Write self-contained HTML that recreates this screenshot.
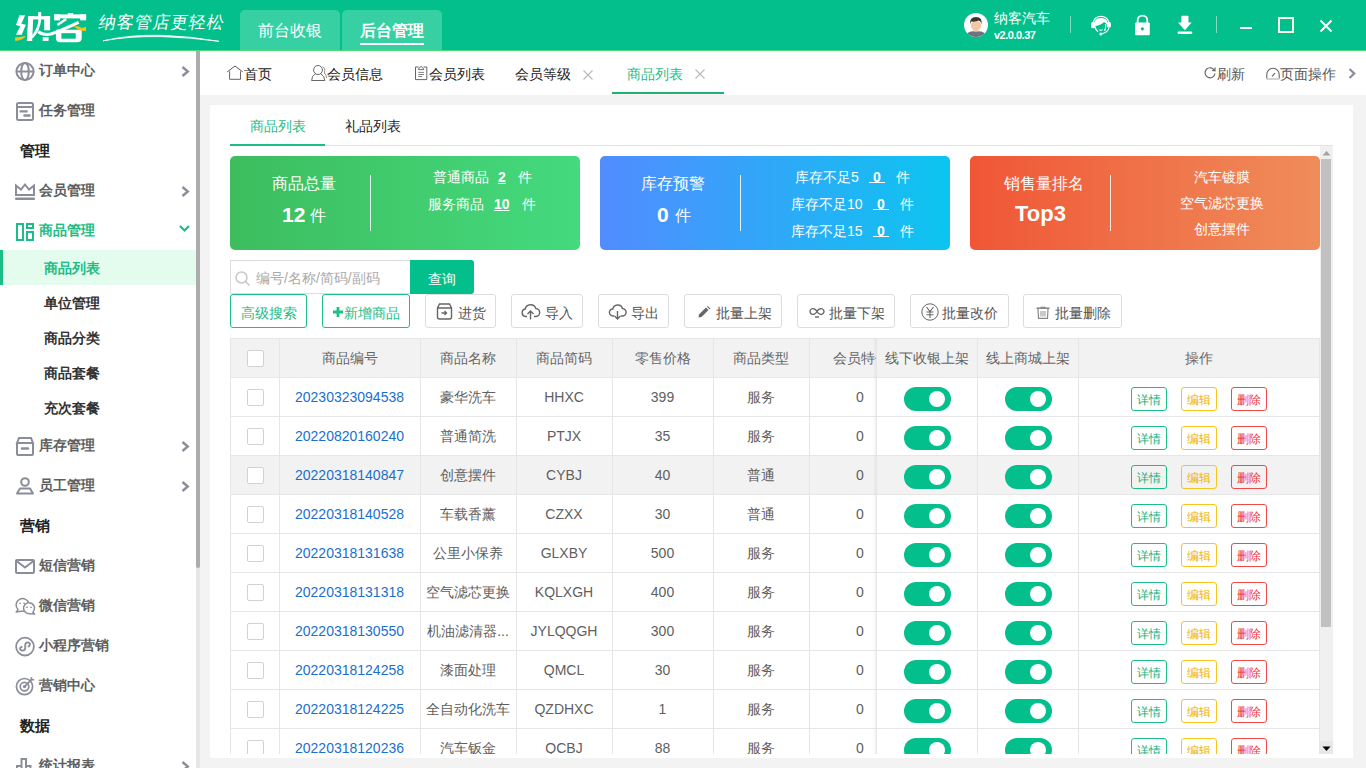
<!DOCTYPE html>
<html><head><meta charset="utf-8">
<style>
*{margin:0;padding:0;box-sizing:border-box}
html,body{width:1366px;height:768px;overflow:hidden;background:#f3f3f3;font-family:"Liberation Sans",sans-serif;}
.a{position:absolute;white-space:nowrap}
svg{position:absolute;overflow:visible}
#hdr{position:absolute;z-index:5;left:0;top:0;width:1366px;height:51px;background:#02bf8b;border-bottom:1px solid #4fd97c}
.htab{position:absolute;top:10px;height:40px;width:100px;background:#36d0a3;border-radius:5px 5px 0 0;color:#fff;font-size:16px;text-align:center;line-height:42px}
#side{position:absolute;left:0;top:50px;width:196px;height:718px;background:#fff;overflow:hidden}
.mt{left:39px;height:40px;line-height:40px;font-size:14px;font-weight:bold;color:#5e5e5e}
.sec{position:absolute;left:20px;margin-top:1px;font-size:15px;font-weight:bold;color:#222;line-height:40px}
.st{left:44px;margin-top:1px;height:35px;line-height:35px;font-size:14px;font-weight:bold;color:#333}
#tabs{position:absolute;left:200px;top:51px;width:1166px;height:44px;background:#fff}
.tt{top:1px;height:44px;line-height:44px;font-size:14px;color:#222}
#panel{position:absolute;left:210px;top:105px;width:1143px;height:653px;background:#fff;overflow:hidden}
</style></head><body>
<!-- HEADER -->
<div id="hdr">
  <svg style="left:0;top:0" width="240" height="50">
    <g fill="#fff">
      <polygon points="19.4,15.2 25.1,15.2 21.4,23.8 25.9,24.8 21.7,34.7 16,34.7 20.2,26.3 16,25.1"/>
      <polygon points="28.3,16.2 33.3,16.2 32.2,40.9 26.8,40.9"/>
      <rect x="28.3" y="16.2" width="21.8" height="3.2"/>
      <rect x="38.2" y="12" width="3" height="7.6"/>
      <rect x="44.2" y="16.2" width="5.9" height="14.1"/>
      <rect x="42.7" y="37.2" width="5.9" height="3.7"/>
      <rect x="67.8" y="13" width="5.4" height="2.6"/>
      <rect x="54.2" y="14.4" width="31.9" height="4"/>
      <rect x="54.2" y="14.4" width="5.8" height="6"/>
      <rect x="80.2" y="14.4" width="5.9" height="6"/>
      <path d="M55.9 29.8 H81.7 V38 Q81.7 42.2 77 42.2 H60 Q55.9 42.2 55.9 38 Z"/>
    </g>
    <rect x="61.4" y="33.2" width="14.3" height="5.5" fill="#02bf8b"/>
    <g stroke="#fff" fill="none">
      <path d="M40 19 Q38.8 30 32 37.5" stroke-width="2.6"/>
      <path d="M38.2 31.5 Q43 35.5 51 34 Q60 31 78.7 22.4" stroke-width="3"/>
      <path d="M57.4 25.1 L66.3 19.1" stroke-width="2.4"/>
    </g>
    <path d="M15 37.6 Q20 37.2 25.5 36 Q24.5 39.5 15.3 41Z" fill="#f7c21a"/>
    <path d="M73.5 26 Q79 25.8 82 28 L86 26.8 L86 30.8 Q80 32 73.5 26Z" fill="#f7c21a"/>
  </svg>
  <svg style="left:0;top:0" width="240" height="50"><path d="M103 40.8 Q130 34.5 161 35.3 Q190 36.2 219 41.3 Q190 37.4 161 36.6 Q130 36 103 40.8Z" fill="#fff" stroke="#fff" stroke-width="0.8"/></svg>
  <div class="a" style="left:99px;top:11px;font-family:'Liberation Serif',serif;font-size:17px;color:#fff;letter-spacing:1px;line-height:23px;transform:skewX(-10deg)">纳客管店更轻松</div>
  <div class="htab" style="left:240px">前台收银</div>
  <div class="htab" style="left:342px;font-weight:bold">后台管理<div style="position:absolute;left:18px;top:33px;width:64px;height:2px;background:#fff"></div></div>
  <!-- avatar -->
  <svg style="left:964px;top:13px" width="24" height="24" viewBox="0 0 24 24">
    
    <circle cx="12" cy="12" r="12" fill="#fff"/>
    <path d="M3.3 20.3 Q6 18 12 18 Q18 18 20.7 20.3 A12 12 0 0 1 3.3 20.3Z" fill="#6f7282"/>
    <rect x="10.2" y="15" width="3.6" height="3.8" fill="#f0c49e"/>
    <ellipse cx="12" cy="12.6" rx="5.1" ry="5.2" fill="#f3c7a1"/>
    <path d="M6 11.8 Q5.2 4 12 4 Q18.5 4 17.6 11.3 Q16.8 8.2 15 7.6 Q11 9.2 7.2 8.6 Q6.4 9.8 6 11.8Z" fill="#363636"/>
  </svg>
  <div class="a" style="left:994px;top:8px;font-size:14px;color:#fff;line-height:20px">纳客汽车</div>
  <div class="a" style="left:994px;top:28px;font-size:11px;font-weight:bold;color:#fff;line-height:14px;letter-spacing:-0.5px">v2.0.0.37</div>
  <div class="a" style="left:1070px;top:16px;width:1px;height:17px;background:#7fdcbc"></div>
  <!-- headset -->
  <svg style="left:1088px;top:12px" width="26" height="26" viewBox="0 0 26 26">
    <path d="M5 10.5 A8.3 8.3 0 0 1 21 10.5" stroke="#fff" stroke-width="1.2" fill="none"/>
    <path d="M6.3 10.5 Q7 6 13 6 Q19 6 19.6 10.5 L19.6 13 L17.8 11.3 Q16.5 9.8 15.8 10.3 Q14 12.5 8 14 L6.5 15Z" fill="#fff"/>
    <rect x="3" y="10" width="4.3" height="6.2" rx="1.6" fill="#fff"/>
    <rect x="19" y="10" width="3.9" height="5.6" rx="1.6" fill="#fff"/>
    <path d="M7 15 Q7.8 18.5 10 19.8" stroke="#fff" stroke-width="1.3" fill="none"/>
    <path d="M17.6 12 Q18 17 16.5 18.8" stroke="#fff" stroke-width="1.3" fill="none"/>
    <path d="M11.3 17.8 Q13 18.8 14.9 17.6" stroke="#fff" stroke-width="1.1" fill="none"/>
    <path d="M21 15.5 Q20 20.5 13.5 21.8" stroke="#fff" stroke-width="1.2" fill="none"/>
    <circle cx="12.8" cy="22" r="1.5" fill="#fff"/>
  </svg>
  <!-- lock -->
  <svg style="left:1134px;top:15px" width="16" height="21" viewBox="0 0 16 21">
    <path d="M3.6 8.5 L3.6 5.4 A4.85 4.85 0 0 1 13.3 5.4 L13.3 8.5" stroke="#fff" stroke-width="1.8" fill="none"/>
    <rect x="1" y="7.6" width="14.8" height="12.7" rx="1.3" fill="#fff"/>
    <circle cx="8.4" cy="13.8" r="1.6" fill="#02bf8b"/>
  </svg>
  <!-- download -->
  <svg style="left:1177px;top:15px" width="16" height="20" viewBox="0 0 16 20">
    <rect x="4.4" y="0.7" width="7.1" height="9" rx="1" fill="#fff"/>
    <path d="M1 7.6 L14.7 7.6 L7.9 15.2Z" fill="#fff"/>
    <rect x="0.6" y="16.5" width="14.7" height="2.5" rx="1.2" fill="#fff"/>
  </svg>
  <div class="a" style="left:1216px;top:16px;width:1px;height:17px;background:#7fdcbc"></div>
  <div class="a" style="left:1240px;top:27px;width:12px;height:2px;background:#fff"></div>
  <div class="a" style="left:1278px;top:17px;width:16px;height:16px;border:2px solid #fbfde6"></div>
  <svg style="left:1320px;top:20px" width="12" height="12"><path d="M0.5 0.5 L11.5 11.5 M11.5 0.5 L0.5 11.5" stroke="#fff" stroke-width="2"/></svg>
</div>

<div id="side">
 <!-- 订单中心 y50-90 -->
 <svg style="left:15px;top:12px" width="20" height="20" viewBox="0 0 20 20"><g stroke="#8c8d9a" stroke-width="2" fill="none"><circle cx="10" cy="9.5" r="8.6"/><ellipse cx="10" cy="9.5" rx="3.8" ry="8.6"/><path d="M1.5 9.5H18.5"/></g></svg>
 <div class="a mt" style="top:0">订单中心</div>
 <svg style="left:181px;top:16px" width="9" height="11"><path d="M1.5 1 L6.8 5.5 L1.5 10" stroke="#8c8d9a" stroke-width="2.4" fill="none"/></svg>
 <!-- 任务管理 y90-130 -->
 <svg style="left:16px;top:52px" width="18" height="19" viewBox="0 0 18 19"><g stroke="#8c8d9a" stroke-width="2" fill="none"><rect x="1" y="1" width="16" height="17" rx="1.5"/><path d="M1 5H17"/><path d="M4.6 9.4H10.6M8.4 13.5H13.6" stroke-linecap="round" stroke-width="2.4"/></g></svg>
 <div class="a mt" style="top:40px">任务管理</div>
 <div class="a sec" style="top:80px">管理</div>
 <!-- 会员管理 y170-210 -->
 <svg style="left:15px;top:133px" width="20" height="17" viewBox="0 0 20 17"><g stroke="#8c8d9a" stroke-width="2" fill="none"><path d="M1 12 L1 2.5 L6 6.5 L10 1.5 L14 6.5 L19 2.5 L19 12 Z"/></g><rect x="0" y="14.5" width="20" height="2.5" rx="1" fill="#8c8d9a"/></svg>
 <div class="a mt" style="top:120px">会员管理</div>
 <svg style="left:181px;top:136px" width="9" height="11"><path d="M1.5 1 L6.8 5.5 L1.5 10" stroke="#8c8d9a" stroke-width="2.4" fill="none"/></svg>
 <!-- 商品管理 y210-250 -->
 <svg style="left:16px;top:173px" width="18" height="18" viewBox="0 0 18 18"><g stroke="#1dbd87" stroke-width="2" fill="none"><rect x="1" y="1" width="6" height="16"/><rect x="11" y="1" width="6" height="4"/><rect x="11" y="9" width="6" height="8"/></g></svg>
 <div class="a mt" style="top:160px;color:#1dbd87">商品管理</div>
 <svg style="left:179px;top:175px" width="11" height="7"><path d="M1 1 L5.5 5.5 L10 1" stroke="#1dbd87" stroke-width="2.2" fill="none"/></svg>
 <!-- sub items -->
 <div class="a" style="left:0;top:200px;width:196px;height:35px;background:#e3fcee;border-left:3px solid #1dbd87"></div>
 <div class="a st" style="top:200px;color:#1dbd87">商品列表</div>
 <div class="a st" style="top:235px">单位管理</div>
 <div class="a st" style="top:270px">商品分类</div>
 <div class="a st" style="top:305px">商品套餐</div>
 <div class="a st" style="top:340px">充次套餐</div>
 <!-- 库存管理 y425-465 -->
 <svg style="left:16px;top:387px" width="18" height="19" viewBox="0 0 18 19"><g stroke="#8c8d9a" stroke-width="2" fill="none"><path d="M1 6 L3 1 L15 1 L17 6 Z"/><path d="M1 6 L1 17 Q1 18 2 18 L16 18 Q17 18 17 17 L17 6"/><path d="M6 11.5H12" stroke-linecap="round" stroke-width="2.4"/></g></svg>
 <div class="a mt" style="top:375px">库存管理</div>
 <svg style="left:181px;top:391px" width="9" height="11"><path d="M1.5 1 L6.8 5.5 L1.5 10" stroke="#8c8d9a" stroke-width="2.4" fill="none"/></svg>
 <!-- 员工管理 y465-505 -->
 <svg style="left:16px;top:427px" width="18" height="18" viewBox="0 0 18 18"><g stroke="#8c8d9a" stroke-width="2" fill="none"><circle cx="9" cy="5" r="3.8"/><path d="M1 16.5 L4 11.5 L14 11.5 L17 16.5 Z" stroke-linejoin="round"/></g></svg>
 <div class="a mt" style="top:415px">员工管理</div>
 <svg style="left:181px;top:431px" width="9" height="11"><path d="M1.5 1 L6.8 5.5 L1.5 10" stroke="#8c8d9a" stroke-width="2.4" fill="none"/></svg>
 <div class="a sec" style="top:455px">营销</div>
 <!-- 短信营销 y545-585 -->
 <svg style="left:15px;top:509px" width="20" height="15" viewBox="0 0 20 15"><g stroke="#8c8d9a" stroke-width="2" fill="none"><rect x="1" y="1" width="18" height="13" rx="1"/><path d="M1.5 2 L10 8.5 L18.5 2"/></g></svg>
 <div class="a mt" style="top:495px">短信营销</div>
 <!-- 微信营销 y585-625 -->
 <svg style="left:15px;top:548px" width="21" height="17" viewBox="0 0 21 17"><g stroke="#8c8d9a" stroke-width="1.5" fill="#fff" stroke-linejoin="round"><path d="M3 11.5 A6.4 6.4 0 1 1 6.8 13.3 Q4 13.5 1.2 14 Q2.5 12.5 3 11.5Z"/><path d="M17.8 14.2 A5.5 5.5 0 1 0 14 15.7 Q17 15.8 19.6 16 Q18.5 15 17.8 14.2Z"/></g><g stroke="#8c8d9a" stroke-width="1.2"><path d="M4.3 5.3H5.9M8.3 5.3H9.9M11.2 9.4H12.8M15.2 9.4H16.8"/></g></svg>
 <div class="a mt" style="top:535px">微信营销</div>
 <!-- 小程序营销 y625-665 -->
 <svg style="left:15px;top:587px" width="20" height="20" viewBox="0 0 20 20"><g stroke="#8c8d9a" stroke-width="1.8" fill="none"><circle cx="10" cy="9.6" r="8.9"/><path d="M7.5 9.6 Q5 10 5 11.7 Q5.3 13.6 7.5 13.6 Q10.2 13.4 10.2 11 L10.2 8 Q10.3 5.5 12.5 5.3 Q14.8 5.3 15 7.3 Q14.8 9.3 12.7 9.6"/></g></svg>
 <div class="a mt" style="top:575px">小程序营销</div>
 <!-- 营销中心 y665-705 -->
 <svg style="left:15px;top:627px" width="20" height="20" viewBox="0 0 20 20"><g stroke="#8c8d9a" stroke-width="1.7" fill="none"><circle cx="9.5" cy="9.6" r="8.1"/><circle cx="9.5" cy="9.6" r="4.3"/><path d="M9.5 9.6 L16.5 2.6"/></g><circle cx="9.5" cy="9.6" r="1.7" fill="#8c8d9a"/><path d="M15.5 0.3 L17.3 0.3 L17.3 1.9 L19.2 1.9 L19.2 3.6 L15.5 3.6Z" fill="#8c8d9a"/></svg>
 <div class="a mt" style="top:615px">营销中心</div>
 <div class="a sec" style="top:655px">数据</div>
 <!-- 统计报表 y745-785 -->
 <svg style="left:16px;top:707px" width="18" height="18" viewBox="0 0 18 18"><g stroke="#8c8d9a" stroke-width="2" fill="none"><path d="M1 17 L1 9 L5.5 9 M5.5 17 L5.5 2 L10 2 L10 17 M10 9 L14.5 9 L14.5 17"/></g></svg>
 <div class="a mt" style="top:695px">统计报表</div>
 <svg style="left:181px;top:711px" width="9" height="11"><path d="M1.5 1 L6.8 5.5 L1.5 10" stroke="#8c8d9a" stroke-width="2.4" fill="none"/></svg>
</div>
<div class="a" style="left:196px;top:50px;width:4px;height:718px;background:#e6e6e6"></div>
<div class="a" style="left:196px;top:50px;width:4px;height:518px;background:#acacac;border-radius:0 0 2px 2px"></div>

<div id="tabs">
 <svg style="left:27px;top:14px" width="17" height="16" viewBox="0 0 17 16"><path d="M0.3 6.8 L8 1 L15.7 6.8" stroke="#444" stroke-width="0.9" fill="none"/><path d="M2.6 6.3 L2.6 14.3 L13.5 14.3 L13.5 6.3" stroke="#666" stroke-width="1" fill="none"/></svg>
 <div class="a tt" style="left:44px">首页</div>
 <svg style="left:111px;top:14px" width="17" height="17" viewBox="0 0 17 17"><g stroke="#555" stroke-width="0.9" fill="none"><ellipse cx="7" cy="5" rx="4.4" ry="4.5"/><path d="M4.6 8.5 Q0.6 11 0.6 15.5 L13.8 15.5 Q13.8 11 9.4 8.5"/><path d="M11.6 1.7 Q14.8 3 13.4 8 Q15.6 9.6 15.6 13" stroke="#888"/></g></svg>
 <div class="a tt" style="left:127px">会员信息</div>
 <svg style="left:215px;top:14px" width="13" height="16" viewBox="0 0 13 16"><path d="M3.6 2 L0.5 2 L0.5 14.6 L11.8 14.6 L11.8 2 L8.6 2" stroke="#666" stroke-width="1" fill="none"/><path d="M3.3 4.6 Q4 2.2 6.1 1.3 Q8.2 2.2 8.9 4.6Z" stroke="#666" stroke-width="0.9" fill="#f4f4f4"/><path d="M3.3 7.4H9M3.3 9.5H9M3.3 11.5H7.2" stroke="#777" stroke-width="0.9"/></svg>
 <div class="a tt" style="left:229px">会员列表</div>
 <div class="a tt" style="left:315px">会员等级</div>
 <svg style="left:383px;top:19px" width="10" height="10"><path d="M0.5 0.5 L9.5 9.5 M9.5 0.5 L0.5 9.5" stroke="#bbb" stroke-width="1.2"/></svg>
 <div class="a tt" style="left:427px;color:#1dbd87">商品列表</div>
 <svg style="left:495px;top:18px" width="10" height="10"><path d="M0.5 0.5 L9.5 9.5 M9.5 0.5 L0.5 9.5" stroke="#bbb" stroke-width="1.2"/></svg>
 <div class="a" style="left:412px;top:41px;width:112px;height:2px;background:#1fb36d"></div>
 <svg style="left:1004px;top:16px" width="12" height="12" viewBox="0 0 12 12"><path d="M10.5 3.5 A5 5 0 1 0 11 6.5" stroke="#666" stroke-width="1.2" fill="none"/><path d="M8 3.5 L11 3.8 L11 0.5" stroke="#666" stroke-width="1.2" fill="none"/></svg>
 <div class="a tt" style="left:1017px;color:#555">刷新</div>
 <svg style="left:1066px;top:16px" width="14" height="14" viewBox="0 0 14 14"><path d="M0.8 11.5 L0.8 7.5 A6.2 6.2 0 0 1 13.2 7.5 L13.2 11.5" stroke="#666" stroke-width="1.1" fill="none"/><path d="M6 9.3 L9 6.2" stroke="#666" stroke-width="1.2"/><path d="M0.5 12H13.5" stroke="#c8c8c8" stroke-width="1.6"/></svg>
 <div class="a tt" style="left:1080px;color:#555">页面操作</div>
 <svg style="left:1148px;top:17px" width="9" height="11"><path d="M1.5 1 L6.2 5.5 L1.5 10" stroke="#8c8d9a" stroke-width="2.3" fill="none"/></svg>
</div>
<div id="panel">
<div class="a" style="left:40px;top:11px;font-size:14px;line-height:20px;color:#1dbd87">商品列表</div>
<div class="a" style="left:135px;top:11px;font-size:14px;line-height:20px;color:#222">礼品列表</div>
<div class="a" style="left:20px;top:40px;width:1103px;height:1px;background:#e4e4e4"></div>
<div class="a" style="left:20px;top:39px;width:95px;height:2px;background:#1dbd87"></div>
<div class="a" style="left:20px;top:51px;width:350px;height:94px;background:linear-gradient(90deg,#3dbd5e,#44da7e);border-radius:5px"></div>
<div class="a" style="left:160px;top:70px;width:1px;height:56px;background:rgba(255,255,255,.85)"></div>
<div class="a" style="left:390px;top:51px;width:350px;height:94px;background:linear-gradient(90deg,#518cff,#0cc5f0);border-radius:5px"></div>
<div class="a" style="left:530px;top:70px;width:1px;height:56px;background:rgba(255,255,255,.85)"></div>
<div class="a" style="left:760px;top:51px;width:350px;height:94px;background:linear-gradient(90deg,#f05636,#ef8d5a);border-radius:5px"></div>
<div class="a" style="left:900px;top:70px;width:1px;height:56px;background:rgba(255,255,255,.85)"></div>
<div class="a" style="left:62px;top:68px;color:#fff;font-size:16px;line-height:22px">商品总量</div>
<div class="a" style="left:72px;top:96px;color:#fff;font-size:21px;font-weight:bold;line-height:28px">12</div>
<div class="a" style="left:100px;top:100px;color:#fff;font-size:16px;line-height:22px">件</div>
<div class="a" style="left:223px;top:62px;color:#fff;font-size:14px;line-height:20px">普通商品</div>
<div class="a" style="left:288px;top:62px;color:#fff;font-size:14px;font-weight:bold;line-height:20px"><u>2</u></div>
<div class="a" style="left:308px;top:62px;color:#fff;font-size:14px;line-height:20px">件</div>
<div class="a" style="left:218px;top:89px;color:#fff;font-size:14px;line-height:20px">服务商品</div>
<div class="a" style="left:284px;top:89px;color:#fff;font-size:14px;font-weight:bold;line-height:20px"><u>10</u></div>
<div class="a" style="left:312px;top:89px;color:#fff;font-size:14px;line-height:20px">件</div>
<div class="a" style="left:431px;top:68px;color:#fff;font-size:16px;line-height:22px">库存预警</div>
<div class="a" style="left:447px;top:96px;color:#fff;font-size:21px;font-weight:bold;line-height:28px">0</div>
<div class="a" style="left:465px;top:100px;color:#fff;font-size:16px;line-height:22px">件</div>
<div class="a" style="left:585px;top:62px;color:#fff;font-size:14px;line-height:20px">库存不足5</div>
<div class="a" style="left:659px;top:62px;color:#fff;font-size:14px;font-weight:bold;line-height:20px;width:16px;text-align:center">0</div>
<div class="a" style="left:659px;top:77px;width:16px;height:1px;background:#fff"></div>
<div class="a" style="left:686px;top:62px;color:#fff;font-size:14px;line-height:20px">件</div>
<div class="a" style="left:581px;top:89px;color:#fff;font-size:14px;line-height:20px">库存不足10</div>
<div class="a" style="left:663px;top:89px;color:#fff;font-size:14px;font-weight:bold;line-height:20px;width:16px;text-align:center">0</div>
<div class="a" style="left:663px;top:104px;width:16px;height:1px;background:#fff"></div>
<div class="a" style="left:690px;top:89px;color:#fff;font-size:14px;line-height:20px">件</div>
<div class="a" style="left:581px;top:116px;color:#fff;font-size:14px;line-height:20px">库存不足15</div>
<div class="a" style="left:663px;top:116px;color:#fff;font-size:14px;font-weight:bold;line-height:20px;width:16px;text-align:center">0</div>
<div class="a" style="left:663px;top:131px;width:16px;height:1px;background:#fff"></div>
<div class="a" style="left:690px;top:116px;color:#fff;font-size:14px;line-height:20px">件</div>
<div class="a" style="left:794px;top:68px;color:#fff;font-size:16px;line-height:22px">销售量排名</div>
<div class="a" style="left:805px;top:95px;color:#fff;font-size:22px;font-weight:bold;line-height:28px">Top3</div>
<div class="a" style="left:912px;top:62px;color:#fff;font-size:14px;line-height:20px;width:200px;text-align:center">汽车镀膜</div>
<div class="a" style="left:912px;top:88px;color:#fff;font-size:14px;line-height:20px;width:200px;text-align:center">空气滤芯更换</div>
<div class="a" style="left:912px;top:114px;color:#fff;font-size:14px;line-height:20px;width:200px;text-align:center">创意摆件</div>
<div class="a" style="left:20px;top:155px;width:180px;height:34px;border:1px solid #ddd;border-right:none;background:#fff"></div>
<svg style="left:25px;top:166px" width="16" height="15" viewBox="0 0 16 15"><circle cx="6.5" cy="6.5" r="5.5" stroke="#c8c8c8" stroke-width="1.5" fill="none"/><path d="M10.5 10.5 L14.5 14.5" stroke="#c8c8c8" stroke-width="1.6"/></svg>
<div class="a" style="left:46px;top:163px;font-size:14px;line-height:20px;color:#aaa">编号/名称/简码/副码</div>
<div class="a" style="left:200px;top:155px;width:64px;height:34px;background:#02bf8b;border-radius:0 3px 3px 0;color:#fff;font-size:14px;line-height:34px;padding-top:2px;text-align:center">查询</div>
<div class="a" style="left:20px;top:189px;width:77px;height:34px;border:1px solid #1dbd87;border-radius:3px;color:#1dbd87;font-size:14px;line-height:32px;padding-top:2px;text-align:center">高级搜索</div>
<div class="a" style="left:112px;top:189px;width:88px;height:34px;border:1px solid #1dbd87;border-radius:3px"></div>
<svg style="left:123px;top:202px" width="10" height="10" viewBox="0 0 10 10"><path d="M5 0 V10 M0 5 H10" stroke="#1dbd87" stroke-width="2.8"/></svg>
<div class="a" style="left:134px;top:198px;font-size:14px;line-height:20px;color:#1dbd87">新增商品</div>
<div class="a" style="left:215px;top:189px;width:71px;height:34px;border:1px solid #ddd;border-radius:3px;background:#fff;"></div>
<div class="a" style="left:248px;top:198px;font-size:14px;line-height:20px;color:#555">进货</div>
<div class="a" style="left:301px;top:189px;width:72px;height:34px;border:1px solid #ddd;border-radius:3px;background:#fff;"></div>
<div class="a" style="left:335px;top:198px;font-size:14px;line-height:20px;color:#555">导入</div>
<div class="a" style="left:388px;top:189px;width:71px;height:34px;border:1px solid #ddd;border-radius:3px;background:#fff;"></div>
<div class="a" style="left:421px;top:198px;font-size:14px;line-height:20px;color:#555">导出</div>
<div class="a" style="left:474px;top:189px;width:98px;height:34px;border:1px solid #ddd;border-radius:3px;background:#fff;"></div>
<div class="a" style="left:506px;top:198px;font-size:14px;line-height:20px;color:#555">批量上架</div>
<div class="a" style="left:587px;top:189px;width:98px;height:34px;border:1px solid #ddd;border-radius:3px;background:#fff;"></div>
<div class="a" style="left:619px;top:198px;font-size:14px;line-height:20px;color:#555">批量下架</div>
<div class="a" style="left:700px;top:189px;width:99px;height:34px;border:1px solid #ddd;border-radius:3px;background:#fff;"></div>
<div class="a" style="left:732px;top:198px;font-size:14px;line-height:20px;color:#555">批量改价</div>
<div class="a" style="left:813px;top:189px;width:99px;height:34px;border:1px solid #ddd;border-radius:3px;background:#fff;"></div>
<div class="a" style="left:845px;top:198px;font-size:14px;line-height:20px;color:#555">批量删除</div>
<svg style="left:226px;top:198px" width="17" height="17" viewBox="0 0 17 17"><path d="M1.5 5 L1.5 14 Q1.5 16 3.5 16 L13.5 16 Q15.5 16 15.5 14 L15.5 5 L13.5 1 L3.5 1 Z M1.5 5 L15.5 5" stroke="#666" stroke-width="1.4" fill="none"/><path d="M5.5 10 L10.5 10 M8.5 8 L10.5 10 L8.5 12" stroke="#666" stroke-width="1.4" fill="none"/></svg>
<svg style="left:311px;top:198px" width="19" height="17" viewBox="0 0 19 17"><path d="M6 13.5 L4.5 13.5 A3.8 3.8 0 0 1 4.2 6 A5.5 5.5 0 0 1 14.8 5.5 A4 4 0 0 1 14.5 13.5 L13 13.5" stroke="#666" stroke-width="1.4" fill="none"/><path d="M9.5 16.5 L9.5 8.5 M6.5 11 L9.5 8 L12.5 11" stroke="#666" stroke-width="1.4" fill="none"/></svg>
<svg style="left:399px;top:198px" width="17" height="17" viewBox="0 0 17 17"><path d="M5.5 13 L4 13 A3.5 3.5 0 0 1 3.8 6 A5 5 0 0 1 13.5 5.5 A3.7 3.7 0 0 1 13.2 13 L11.5 13" stroke="#666" stroke-width="1.4" fill="none"/><path d="M8.5 8 L8.5 16 M5.8 13.3 L8.5 16 L11.2 13.3" stroke="#666" stroke-width="1.4" fill="none"/></svg>
<svg style="left:488px;top:201px" width="13" height="12" viewBox="0 0 13 12"><path d="M0.5 11.5 L1 8.5 L8 1.5 L10.5 4 L3.5 11 Z" fill="#666"/><path d="M9 0.8 L9.8 0 L12.5 2.7 L11.7 3.5Z" fill="#666"/></svg>
<svg style="left:599px;top:202px" width="16" height="11" viewBox="0 0 16 11"><path d="M8 4.5 C6.5 2 4 1 2.5 2 C0.5 3.2 0.5 5.8 2.5 7 C4 8 6.5 7 8 4.5 C9.5 2 12 1 13.5 2 C15.5 3.2 15.5 5.8 13.5 7 C12 8 9.5 7 8 4.5Z" stroke="#666" stroke-width="1.4" fill="none"/><path d="M6 10 L10 10" stroke="#666" stroke-width="1.4"/></svg>
<svg style="left:711px;top:198px" width="18" height="18" viewBox="0 0 18 18"><circle cx="9" cy="9" r="8.2" stroke="#666" stroke-width="1" fill="none"/><path d="M5.5 4 L9 8.5 L12.5 4 M9 8.5 L9 15 M5.5 9 L12.5 9 M5.5 11.8 L12.5 11.8" stroke="#666" stroke-width="1.1" fill="none"/></svg>
<svg style="left:826px;top:201px" width="14" height="13" viewBox="0 0 14 13"><path d="M0.5 2.2 L13.5 2.2" stroke="#888" stroke-width="1.6"/><path d="M4.5 1.3 L9.5 1.3" stroke="#888" stroke-width="1.2"/><path d="M2 3 L2.5 12.3 L11.5 12.3 L12 3" stroke="#888" stroke-width="1.2" fill="none"/><path d="M5 5 L5 10.5 M7 5 L7 10.5 M9 5 L9 10.5" stroke="#888" stroke-width="0.9"/></svg>
<div class="a" style="left:20px;top:233px;width:1090px;height:416px;overflow:hidden">
<div class="a" style="left:0px;top:0px;width:1089px;height:39px;background:#f2f2f2"></div>
<div class="a" style="left:0px;top:117px;width:1089px;height:39px;background:#f2f2f2"></div>
<div class="a" style="left:0px;top:0px;width:1089px;height:1px;background:#e6e6e6"></div>
<div class="a" style="left:0px;top:39px;width:1089px;height:1px;background:#e6e6e6"></div>
<div class="a" style="left:0px;top:78px;width:1089px;height:1px;background:#e6e6e6"></div>
<div class="a" style="left:0px;top:117px;width:1089px;height:1px;background:#e6e6e6"></div>
<div class="a" style="left:0px;top:156px;width:1089px;height:1px;background:#e6e6e6"></div>
<div class="a" style="left:0px;top:195px;width:1089px;height:1px;background:#e6e6e6"></div>
<div class="a" style="left:0px;top:234px;width:1089px;height:1px;background:#e6e6e6"></div>
<div class="a" style="left:0px;top:273px;width:1089px;height:1px;background:#e6e6e6"></div>
<div class="a" style="left:0px;top:312px;width:1089px;height:1px;background:#e6e6e6"></div>
<div class="a" style="left:0px;top:351px;width:1089px;height:1px;background:#e6e6e6"></div>
<div class="a" style="left:0px;top:390px;width:1089px;height:1px;background:#e6e6e6"></div>
<div class="a" style="left:0px;top:429px;width:1089px;height:1px;background:#e6e6e6"></div>
<div class="a" style="left:0px;top:0px;width:1px;height:500px;background:#e6e6e6"></div>
<div class="a" style="left:49px;top:0px;width:1px;height:500px;background:#e6e6e6"></div>
<div class="a" style="left:190px;top:0px;width:1px;height:500px;background:#e6e6e6"></div>
<div class="a" style="left:286px;top:0px;width:1px;height:500px;background:#e6e6e6"></div>
<div class="a" style="left:382px;top:0px;width:1px;height:500px;background:#e6e6e6"></div>
<div class="a" style="left:483px;top:0px;width:1px;height:500px;background:#e6e6e6"></div>
<div class="a" style="left:579px;top:0px;width:1px;height:500px;background:#e6e6e6"></div>
<div class="a" style="left:646px;top:0px;width:1px;height:500px;background:#e6e6e6"></div>
<div class="a" style="left:747px;top:0px;width:1px;height:500px;background:#e6e6e6"></div>
<div class="a" style="left:848px;top:0px;width:1px;height:500px;background:#e6e6e6"></div>
<div class="a" style="left:1089px;top:0px;width:1px;height:500px;background:#e6e6e6"></div>
<div class="a" style="left:643px;top:0px;width:3px;height:500px;background:linear-gradient(90deg,rgba(0,0,0,0),rgba(0,0,0,.05))"></div>
<div class="a" style="left:49px;top:1px;width:141px;height:39px;font-size:14px;line-height:39px;color:#666;text-align:center;">商品编号</div>
<div class="a" style="left:190px;top:1px;width:96px;height:39px;font-size:14px;line-height:39px;color:#666;text-align:center;">商品名称</div>
<div class="a" style="left:286px;top:1px;width:96px;height:39px;font-size:14px;line-height:39px;color:#666;text-align:center;">商品简码</div>
<div class="a" style="left:382px;top:1px;width:101px;height:39px;font-size:14px;line-height:39px;color:#666;text-align:center;">零售价格</div>
<div class="a" style="left:483px;top:1px;width:96px;height:39px;font-size:14px;line-height:39px;color:#666;text-align:center;">商品类型</div>
<div class="a" style="left:603px;top:1px;width:43px;height:39px;font-size:14px;line-height:39px;color:#666;overflow:hidden">会员特价</div>
<div class="a" style="left:646px;top:1px;width:101px;height:39px;font-size:14px;line-height:39px;color:#666;text-align:center;">线下收银上架</div>
<div class="a" style="left:747px;top:1px;width:101px;height:39px;font-size:14px;line-height:39px;color:#666;text-align:center;">线上商城上架</div>
<div class="a" style="left:848px;top:1px;width:241px;height:39px;font-size:14px;line-height:39px;color:#666;text-align:center;">操作</div>
<div class="a" style="left:17px;top:12px;width:17px;height:17px;border:1px solid #d2d2d2;border-radius:2px;background:#fff"></div>
<div class="a" style="left:17px;top:51px;width:17px;height:17px;border:1px solid #d2d2d2;border-radius:2px;background:#fff"></div>
<div class="a" style="left:49px;top:40px;width:141px;height:39px;font-size:14px;line-height:39px;color:#606060;text-align:center;color:#1a6fce">20230323094538</div>
<div class="a" style="left:190px;top:40px;width:96px;height:39px;font-size:14px;line-height:39px;color:#606060;text-align:center;">豪华洗车</div>
<div class="a" style="left:286px;top:40px;width:96px;height:39px;font-size:14px;line-height:39px;color:#606060;text-align:center;">HHXC</div>
<div class="a" style="left:382px;top:40px;width:101px;height:39px;font-size:14px;line-height:39px;color:#606060;text-align:center;">399</div>
<div class="a" style="left:483px;top:40px;width:96px;height:39px;font-size:14px;line-height:39px;color:#606060;text-align:center;">服务</div>
<div class="a" style="left:626px;top:40px;width:10px;height:39px;font-size:14px;line-height:39px;color:#606060">0</div>
<div class="a" style="left:674px;top:49px;width:47px;height:24px;background:#02bf8b;border-radius:12px"></div>
<div class="a" style="left:699px;top:53px;width:16px;height:16px;background:#fff;border-radius:50%"></div>
<div class="a" style="left:775px;top:49px;width:47px;height:24px;background:#02bf8b;border-radius:12px"></div>
<div class="a" style="left:800px;top:53px;width:16px;height:16px;background:#fff;border-radius:50%"></div>
<div class="a" style="left:901px;top:49px;width:36px;height:24px;border:1px solid #1dbd87;border-radius:3px;color:#12b07c;font-size:12px;line-height:22px;text-align:center;padding-top:1px">详情</div>
<div class="a" style="left:951px;top:49px;width:36px;height:24px;border:1px solid #f8c51c;border-radius:3px;color:#f2b200;font-size:12px;line-height:22px;text-align:center;padding-top:1px">编辑</div>
<div class="a" style="left:1001px;top:49px;width:36px;height:24px;border:1px solid #f14848;border-radius:3px;color:#ec3434;font-size:12px;line-height:22px;text-align:center;padding-top:1px">删除</div>
<div class="a" style="left:17px;top:90px;width:17px;height:17px;border:1px solid #d2d2d2;border-radius:2px;background:#fff"></div>
<div class="a" style="left:49px;top:79px;width:141px;height:39px;font-size:14px;line-height:39px;color:#606060;text-align:center;color:#1a6fce">20220820160240</div>
<div class="a" style="left:190px;top:79px;width:96px;height:39px;font-size:14px;line-height:39px;color:#606060;text-align:center;">普通简洗</div>
<div class="a" style="left:286px;top:79px;width:96px;height:39px;font-size:14px;line-height:39px;color:#606060;text-align:center;">PTJX</div>
<div class="a" style="left:382px;top:79px;width:101px;height:39px;font-size:14px;line-height:39px;color:#606060;text-align:center;">35</div>
<div class="a" style="left:483px;top:79px;width:96px;height:39px;font-size:14px;line-height:39px;color:#606060;text-align:center;">服务</div>
<div class="a" style="left:626px;top:79px;width:10px;height:39px;font-size:14px;line-height:39px;color:#606060">0</div>
<div class="a" style="left:674px;top:88px;width:47px;height:24px;background:#02bf8b;border-radius:12px"></div>
<div class="a" style="left:699px;top:92px;width:16px;height:16px;background:#fff;border-radius:50%"></div>
<div class="a" style="left:775px;top:88px;width:47px;height:24px;background:#02bf8b;border-radius:12px"></div>
<div class="a" style="left:800px;top:92px;width:16px;height:16px;background:#fff;border-radius:50%"></div>
<div class="a" style="left:901px;top:88px;width:36px;height:24px;border:1px solid #1dbd87;border-radius:3px;color:#12b07c;font-size:12px;line-height:22px;text-align:center;padding-top:1px">详情</div>
<div class="a" style="left:951px;top:88px;width:36px;height:24px;border:1px solid #f8c51c;border-radius:3px;color:#f2b200;font-size:12px;line-height:22px;text-align:center;padding-top:1px">编辑</div>
<div class="a" style="left:1001px;top:88px;width:36px;height:24px;border:1px solid #f14848;border-radius:3px;color:#ec3434;font-size:12px;line-height:22px;text-align:center;padding-top:1px">删除</div>
<div class="a" style="left:17px;top:129px;width:17px;height:17px;border:1px solid #d2d2d2;border-radius:2px;background:#fff"></div>
<div class="a" style="left:49px;top:118px;width:141px;height:39px;font-size:14px;line-height:39px;color:#606060;text-align:center;color:#1a6fce">20220318140847</div>
<div class="a" style="left:190px;top:118px;width:96px;height:39px;font-size:14px;line-height:39px;color:#606060;text-align:center;">创意摆件</div>
<div class="a" style="left:286px;top:118px;width:96px;height:39px;font-size:14px;line-height:39px;color:#606060;text-align:center;">CYBJ</div>
<div class="a" style="left:382px;top:118px;width:101px;height:39px;font-size:14px;line-height:39px;color:#606060;text-align:center;">40</div>
<div class="a" style="left:483px;top:118px;width:96px;height:39px;font-size:14px;line-height:39px;color:#606060;text-align:center;">普通</div>
<div class="a" style="left:626px;top:118px;width:10px;height:39px;font-size:14px;line-height:39px;color:#606060">0</div>
<div class="a" style="left:674px;top:127px;width:47px;height:24px;background:#02bf8b;border-radius:12px"></div>
<div class="a" style="left:699px;top:131px;width:16px;height:16px;background:#fff;border-radius:50%"></div>
<div class="a" style="left:775px;top:127px;width:47px;height:24px;background:#02bf8b;border-radius:12px"></div>
<div class="a" style="left:800px;top:131px;width:16px;height:16px;background:#fff;border-radius:50%"></div>
<div class="a" style="left:901px;top:127px;width:36px;height:24px;border:1px solid #1dbd87;border-radius:3px;color:#12b07c;font-size:12px;line-height:22px;text-align:center;padding-top:1px">详情</div>
<div class="a" style="left:951px;top:127px;width:36px;height:24px;border:1px solid #f8c51c;border-radius:3px;color:#f2b200;font-size:12px;line-height:22px;text-align:center;padding-top:1px">编辑</div>
<div class="a" style="left:1001px;top:127px;width:36px;height:24px;border:1px solid #f14848;border-radius:3px;color:#ec3434;font-size:12px;line-height:22px;text-align:center;padding-top:1px">删除</div>
<div class="a" style="left:17px;top:168px;width:17px;height:17px;border:1px solid #d2d2d2;border-radius:2px;background:#fff"></div>
<div class="a" style="left:49px;top:157px;width:141px;height:39px;font-size:14px;line-height:39px;color:#606060;text-align:center;color:#1a6fce">20220318140528</div>
<div class="a" style="left:190px;top:157px;width:96px;height:39px;font-size:14px;line-height:39px;color:#606060;text-align:center;">车载香薰</div>
<div class="a" style="left:286px;top:157px;width:96px;height:39px;font-size:14px;line-height:39px;color:#606060;text-align:center;">CZXX</div>
<div class="a" style="left:382px;top:157px;width:101px;height:39px;font-size:14px;line-height:39px;color:#606060;text-align:center;">30</div>
<div class="a" style="left:483px;top:157px;width:96px;height:39px;font-size:14px;line-height:39px;color:#606060;text-align:center;">普通</div>
<div class="a" style="left:626px;top:157px;width:10px;height:39px;font-size:14px;line-height:39px;color:#606060">0</div>
<div class="a" style="left:674px;top:166px;width:47px;height:24px;background:#02bf8b;border-radius:12px"></div>
<div class="a" style="left:699px;top:170px;width:16px;height:16px;background:#fff;border-radius:50%"></div>
<div class="a" style="left:775px;top:166px;width:47px;height:24px;background:#02bf8b;border-radius:12px"></div>
<div class="a" style="left:800px;top:170px;width:16px;height:16px;background:#fff;border-radius:50%"></div>
<div class="a" style="left:901px;top:166px;width:36px;height:24px;border:1px solid #1dbd87;border-radius:3px;color:#12b07c;font-size:12px;line-height:22px;text-align:center;padding-top:1px">详情</div>
<div class="a" style="left:951px;top:166px;width:36px;height:24px;border:1px solid #f8c51c;border-radius:3px;color:#f2b200;font-size:12px;line-height:22px;text-align:center;padding-top:1px">编辑</div>
<div class="a" style="left:1001px;top:166px;width:36px;height:24px;border:1px solid #f14848;border-radius:3px;color:#ec3434;font-size:12px;line-height:22px;text-align:center;padding-top:1px">删除</div>
<div class="a" style="left:17px;top:207px;width:17px;height:17px;border:1px solid #d2d2d2;border-radius:2px;background:#fff"></div>
<div class="a" style="left:49px;top:196px;width:141px;height:39px;font-size:14px;line-height:39px;color:#606060;text-align:center;color:#1a6fce">20220318131638</div>
<div class="a" style="left:190px;top:196px;width:96px;height:39px;font-size:14px;line-height:39px;color:#606060;text-align:center;">公里小保养</div>
<div class="a" style="left:286px;top:196px;width:96px;height:39px;font-size:14px;line-height:39px;color:#606060;text-align:center;">GLXBY</div>
<div class="a" style="left:382px;top:196px;width:101px;height:39px;font-size:14px;line-height:39px;color:#606060;text-align:center;">500</div>
<div class="a" style="left:483px;top:196px;width:96px;height:39px;font-size:14px;line-height:39px;color:#606060;text-align:center;">服务</div>
<div class="a" style="left:626px;top:196px;width:10px;height:39px;font-size:14px;line-height:39px;color:#606060">0</div>
<div class="a" style="left:674px;top:205px;width:47px;height:24px;background:#02bf8b;border-radius:12px"></div>
<div class="a" style="left:699px;top:209px;width:16px;height:16px;background:#fff;border-radius:50%"></div>
<div class="a" style="left:775px;top:205px;width:47px;height:24px;background:#02bf8b;border-radius:12px"></div>
<div class="a" style="left:800px;top:209px;width:16px;height:16px;background:#fff;border-radius:50%"></div>
<div class="a" style="left:901px;top:205px;width:36px;height:24px;border:1px solid #1dbd87;border-radius:3px;color:#12b07c;font-size:12px;line-height:22px;text-align:center;padding-top:1px">详情</div>
<div class="a" style="left:951px;top:205px;width:36px;height:24px;border:1px solid #f8c51c;border-radius:3px;color:#f2b200;font-size:12px;line-height:22px;text-align:center;padding-top:1px">编辑</div>
<div class="a" style="left:1001px;top:205px;width:36px;height:24px;border:1px solid #f14848;border-radius:3px;color:#ec3434;font-size:12px;line-height:22px;text-align:center;padding-top:1px">删除</div>
<div class="a" style="left:17px;top:246px;width:17px;height:17px;border:1px solid #d2d2d2;border-radius:2px;background:#fff"></div>
<div class="a" style="left:49px;top:235px;width:141px;height:39px;font-size:14px;line-height:39px;color:#606060;text-align:center;color:#1a6fce">20220318131318</div>
<div class="a" style="left:190px;top:235px;width:96px;height:39px;font-size:14px;line-height:39px;color:#606060;text-align:center;">空气滤芯更换</div>
<div class="a" style="left:286px;top:235px;width:96px;height:39px;font-size:14px;line-height:39px;color:#606060;text-align:center;">KQLXGH</div>
<div class="a" style="left:382px;top:235px;width:101px;height:39px;font-size:14px;line-height:39px;color:#606060;text-align:center;">400</div>
<div class="a" style="left:483px;top:235px;width:96px;height:39px;font-size:14px;line-height:39px;color:#606060;text-align:center;">服务</div>
<div class="a" style="left:626px;top:235px;width:10px;height:39px;font-size:14px;line-height:39px;color:#606060">0</div>
<div class="a" style="left:674px;top:244px;width:47px;height:24px;background:#02bf8b;border-radius:12px"></div>
<div class="a" style="left:699px;top:248px;width:16px;height:16px;background:#fff;border-radius:50%"></div>
<div class="a" style="left:775px;top:244px;width:47px;height:24px;background:#02bf8b;border-radius:12px"></div>
<div class="a" style="left:800px;top:248px;width:16px;height:16px;background:#fff;border-radius:50%"></div>
<div class="a" style="left:901px;top:244px;width:36px;height:24px;border:1px solid #1dbd87;border-radius:3px;color:#12b07c;font-size:12px;line-height:22px;text-align:center;padding-top:1px">详情</div>
<div class="a" style="left:951px;top:244px;width:36px;height:24px;border:1px solid #f8c51c;border-radius:3px;color:#f2b200;font-size:12px;line-height:22px;text-align:center;padding-top:1px">编辑</div>
<div class="a" style="left:1001px;top:244px;width:36px;height:24px;border:1px solid #f14848;border-radius:3px;color:#ec3434;font-size:12px;line-height:22px;text-align:center;padding-top:1px">删除</div>
<div class="a" style="left:17px;top:285px;width:17px;height:17px;border:1px solid #d2d2d2;border-radius:2px;background:#fff"></div>
<div class="a" style="left:49px;top:274px;width:141px;height:39px;font-size:14px;line-height:39px;color:#606060;text-align:center;color:#1a6fce">20220318130550</div>
<div class="a" style="left:190px;top:274px;width:96px;height:39px;font-size:14px;line-height:39px;color:#606060;text-align:center;">机油滤清器...</div>
<div class="a" style="left:286px;top:274px;width:96px;height:39px;font-size:14px;line-height:39px;color:#606060;text-align:center;">JYLQQGH</div>
<div class="a" style="left:382px;top:274px;width:101px;height:39px;font-size:14px;line-height:39px;color:#606060;text-align:center;">300</div>
<div class="a" style="left:483px;top:274px;width:96px;height:39px;font-size:14px;line-height:39px;color:#606060;text-align:center;">服务</div>
<div class="a" style="left:626px;top:274px;width:10px;height:39px;font-size:14px;line-height:39px;color:#606060">0</div>
<div class="a" style="left:674px;top:283px;width:47px;height:24px;background:#02bf8b;border-radius:12px"></div>
<div class="a" style="left:699px;top:287px;width:16px;height:16px;background:#fff;border-radius:50%"></div>
<div class="a" style="left:775px;top:283px;width:47px;height:24px;background:#02bf8b;border-radius:12px"></div>
<div class="a" style="left:800px;top:287px;width:16px;height:16px;background:#fff;border-radius:50%"></div>
<div class="a" style="left:901px;top:283px;width:36px;height:24px;border:1px solid #1dbd87;border-radius:3px;color:#12b07c;font-size:12px;line-height:22px;text-align:center;padding-top:1px">详情</div>
<div class="a" style="left:951px;top:283px;width:36px;height:24px;border:1px solid #f8c51c;border-radius:3px;color:#f2b200;font-size:12px;line-height:22px;text-align:center;padding-top:1px">编辑</div>
<div class="a" style="left:1001px;top:283px;width:36px;height:24px;border:1px solid #f14848;border-radius:3px;color:#ec3434;font-size:12px;line-height:22px;text-align:center;padding-top:1px">删除</div>
<div class="a" style="left:17px;top:324px;width:17px;height:17px;border:1px solid #d2d2d2;border-radius:2px;background:#fff"></div>
<div class="a" style="left:49px;top:313px;width:141px;height:39px;font-size:14px;line-height:39px;color:#606060;text-align:center;color:#1a6fce">20220318124258</div>
<div class="a" style="left:190px;top:313px;width:96px;height:39px;font-size:14px;line-height:39px;color:#606060;text-align:center;">漆面处理</div>
<div class="a" style="left:286px;top:313px;width:96px;height:39px;font-size:14px;line-height:39px;color:#606060;text-align:center;">QMCL</div>
<div class="a" style="left:382px;top:313px;width:101px;height:39px;font-size:14px;line-height:39px;color:#606060;text-align:center;">30</div>
<div class="a" style="left:483px;top:313px;width:96px;height:39px;font-size:14px;line-height:39px;color:#606060;text-align:center;">服务</div>
<div class="a" style="left:626px;top:313px;width:10px;height:39px;font-size:14px;line-height:39px;color:#606060">0</div>
<div class="a" style="left:674px;top:322px;width:47px;height:24px;background:#02bf8b;border-radius:12px"></div>
<div class="a" style="left:699px;top:326px;width:16px;height:16px;background:#fff;border-radius:50%"></div>
<div class="a" style="left:775px;top:322px;width:47px;height:24px;background:#02bf8b;border-radius:12px"></div>
<div class="a" style="left:800px;top:326px;width:16px;height:16px;background:#fff;border-radius:50%"></div>
<div class="a" style="left:901px;top:322px;width:36px;height:24px;border:1px solid #1dbd87;border-radius:3px;color:#12b07c;font-size:12px;line-height:22px;text-align:center;padding-top:1px">详情</div>
<div class="a" style="left:951px;top:322px;width:36px;height:24px;border:1px solid #f8c51c;border-radius:3px;color:#f2b200;font-size:12px;line-height:22px;text-align:center;padding-top:1px">编辑</div>
<div class="a" style="left:1001px;top:322px;width:36px;height:24px;border:1px solid #f14848;border-radius:3px;color:#ec3434;font-size:12px;line-height:22px;text-align:center;padding-top:1px">删除</div>
<div class="a" style="left:17px;top:363px;width:17px;height:17px;border:1px solid #d2d2d2;border-radius:2px;background:#fff"></div>
<div class="a" style="left:49px;top:352px;width:141px;height:39px;font-size:14px;line-height:39px;color:#606060;text-align:center;color:#1a6fce">20220318124225</div>
<div class="a" style="left:190px;top:352px;width:96px;height:39px;font-size:14px;line-height:39px;color:#606060;text-align:center;">全自动化洗车</div>
<div class="a" style="left:286px;top:352px;width:96px;height:39px;font-size:14px;line-height:39px;color:#606060;text-align:center;">QZDHXC</div>
<div class="a" style="left:382px;top:352px;width:101px;height:39px;font-size:14px;line-height:39px;color:#606060;text-align:center;">1</div>
<div class="a" style="left:483px;top:352px;width:96px;height:39px;font-size:14px;line-height:39px;color:#606060;text-align:center;">服务</div>
<div class="a" style="left:626px;top:352px;width:10px;height:39px;font-size:14px;line-height:39px;color:#606060">0</div>
<div class="a" style="left:674px;top:361px;width:47px;height:24px;background:#02bf8b;border-radius:12px"></div>
<div class="a" style="left:699px;top:365px;width:16px;height:16px;background:#fff;border-radius:50%"></div>
<div class="a" style="left:775px;top:361px;width:47px;height:24px;background:#02bf8b;border-radius:12px"></div>
<div class="a" style="left:800px;top:365px;width:16px;height:16px;background:#fff;border-radius:50%"></div>
<div class="a" style="left:901px;top:361px;width:36px;height:24px;border:1px solid #1dbd87;border-radius:3px;color:#12b07c;font-size:12px;line-height:22px;text-align:center;padding-top:1px">详情</div>
<div class="a" style="left:951px;top:361px;width:36px;height:24px;border:1px solid #f8c51c;border-radius:3px;color:#f2b200;font-size:12px;line-height:22px;text-align:center;padding-top:1px">编辑</div>
<div class="a" style="left:1001px;top:361px;width:36px;height:24px;border:1px solid #f14848;border-radius:3px;color:#ec3434;font-size:12px;line-height:22px;text-align:center;padding-top:1px">删除</div>
<div class="a" style="left:17px;top:402px;width:17px;height:17px;border:1px solid #d2d2d2;border-radius:2px;background:#fff"></div>
<div class="a" style="left:49px;top:391px;width:141px;height:39px;font-size:14px;line-height:39px;color:#606060;text-align:center;color:#1a6fce">20220318120236</div>
<div class="a" style="left:190px;top:391px;width:96px;height:39px;font-size:14px;line-height:39px;color:#606060;text-align:center;">汽车钣金</div>
<div class="a" style="left:286px;top:391px;width:96px;height:39px;font-size:14px;line-height:39px;color:#606060;text-align:center;">QCBJ</div>
<div class="a" style="left:382px;top:391px;width:101px;height:39px;font-size:14px;line-height:39px;color:#606060;text-align:center;">88</div>
<div class="a" style="left:483px;top:391px;width:96px;height:39px;font-size:14px;line-height:39px;color:#606060;text-align:center;">服务</div>
<div class="a" style="left:626px;top:391px;width:10px;height:39px;font-size:14px;line-height:39px;color:#606060">0</div>
<div class="a" style="left:674px;top:400px;width:47px;height:24px;background:#02bf8b;border-radius:12px"></div>
<div class="a" style="left:699px;top:404px;width:16px;height:16px;background:#fff;border-radius:50%"></div>
<div class="a" style="left:775px;top:400px;width:47px;height:24px;background:#02bf8b;border-radius:12px"></div>
<div class="a" style="left:800px;top:404px;width:16px;height:16px;background:#fff;border-radius:50%"></div>
<div class="a" style="left:901px;top:400px;width:36px;height:24px;border:1px solid #1dbd87;border-radius:3px;color:#12b07c;font-size:12px;line-height:22px;text-align:center;padding-top:1px">详情</div>
<div class="a" style="left:951px;top:400px;width:36px;height:24px;border:1px solid #f8c51c;border-radius:3px;color:#f2b200;font-size:12px;line-height:22px;text-align:center;padding-top:1px">编辑</div>
<div class="a" style="left:1001px;top:400px;width:36px;height:24px;border:1px solid #f14848;border-radius:3px;color:#ec3434;font-size:12px;line-height:22px;text-align:center;padding-top:1px">删除</div>
</div>
<div class="a" style="left:1110px;top:41px;width:13px;height:608px;background:#f0f0f0"></div>
<div class="a" style="left:1111px;top:54px;width:10px;height:468px;background:#c1c1c1"></div>
<svg style="left:1112px;top:45px" width="9" height="6"><path d="M0.5 5.5 L4.5 1 L8.5 5.5Z" fill="#a3a3a3"/></svg>
<div class="a" style="left:1110px;top:636px;width:13px;height:13px;background:#e8e8e8"></div>
<svg style="left:1112px;top:641px" width="9" height="6"><path d="M0.5 0.5 L4.5 5 L8.5 0.5Z" fill="#000"/></svg>
</div>
</body></html>
